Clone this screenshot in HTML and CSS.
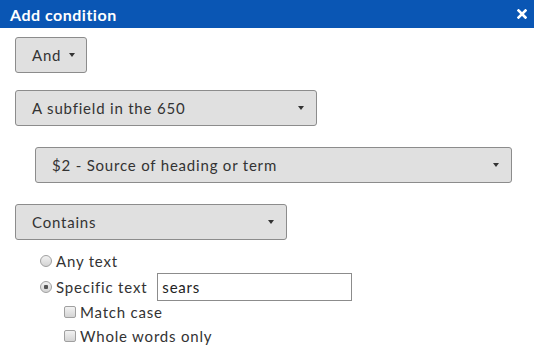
FILE: index.html
```html
<!DOCTYPE html>
<html lang="en">
<head>
<meta charset="UTF-8">
<meta name="viewport" content="width=device-width, initial-scale=1.0">
<title>Add condition</title>
<link rel="stylesheet" href="styles.css">
</head>
<body>

<div class="dialog">
    <div class="dialog-title">
        <span>Add condition</span>
        <svg class="dialog-close" width="10" height="10" viewBox="0 0 10 10">
            <path d="M1.5 1.5 L8.5 8.5 M8.5 1.5 L1.5 8.5" stroke="#fff" stroke-width="2.6" stroke-linecap="square"/>
        </svg>
    </div>
    <div class="dialog-body">
        <div class="dd dd-and"><span>And</span><span class="caret"></span></div>
        <div class="dd dd-field"><span>A subfield in the 650</span><span class="caret"></span></div>
        <div class="dd dd-sub"><span>$2 - Source of heading or term</span><span class="caret"></span></div>
        <div class="dd dd-op"><span>Contains</span><span class="caret"></span></div>

        <div class="options">
            <label class="opt"><input type="radio" name="mode"> Any text</label>
            <label class="opt"><input type="radio" name="mode" checked> Specific text <input class="text-in" type="text" value="sears"></label>
            <label class="opt sub"><input type="checkbox"> Match case</label>
            <label class="opt sub"><input type="checkbox"> Whole words only</label>
        </div>
    </div>
</div>

</body>
</html>
```

FILE: styles.css
```css
/* Add condition dialog */
body {
    margin: 0;
    font-family: Lato, "Open Sans", sans-serif;
    font-size: 15px;
    letter-spacing: 0.8px;
    color: #333;
    background: #fff;
}

.dialog-title {
    height: 28px;
    background-color: #0a56b4;
    color: #fff;
    font-weight: bold;
    font-size: 16px;
    letter-spacing: 0.5px;
    display: flex;
    align-items: center;
    justify-content: space-between;
    padding: 0 7px 0 10px;
}

.dialog-close {
    display: block;
}

.dialog-body {
    padding: 9px 15px;
}

.dd {
    box-sizing: border-box;
    height: 36px;
    display: flex;
    align-items: center;
    justify-content: space-between;
    padding: 0 12px 0 16px;
    background-color: #e0e0e0;
    border: 1px solid #8c8c8c;
    border-radius: 3px;
    margin-bottom: 21px;
}

.caret {
    width: 0;
    height: 0;
    border-style: solid;
    border-width: 4px 3.5px 0 3.5px;
    border-color: #333 transparent transparent transparent;
}

.dd-and {
    width: 72px;
    margin-bottom: 17px;
    padding-right: 11px;
}

.dd-field {
    width: 302px;
}

.dd-sub {
    width: 477px;
    margin-left: 20px;
}

.dd-op {
    width: 272px;
    margin-bottom: 8px;
}

.options {
    padding-left: 24px;
}

.opt {
    display: flex;
    align-items: center;
    height: 26px;
}

.opt.sub {
    height: 24px;
    padding-left: 24px;
}

.opt input[type=radio],
.opt input[type=checkbox] {
    -webkit-appearance: none;
    appearance: none;
    width: 12px;
    height: 12px;
    margin: 0 4px 0 1px;
    border: 1px solid #a0a0a0;
    background: linear-gradient(#f2f2f2, #d4d4d4);
    box-sizing: border-box;
}

.opt input[type=radio] {
    border-radius: 50%;
}

.opt input[type=checkbox] {
    border-radius: 2px;
}

.opt input[type=radio]:checked {
    background: radial-gradient(circle, #555 0, #555 2px, transparent 2.5px), linear-gradient(#f2f2f2, #d4d4d4);
}

.text-in {
    box-sizing: border-box;
    width: 195px;
    height: 28px;
    margin-left: 10px;
    border: 1px solid #8c8c8c;
    padding: 0 4px;
    font-family: Lato, "Open Sans", sans-serif;
    font-size: 15px;
    letter-spacing: 0.8px;
    color: #222;
}
```
